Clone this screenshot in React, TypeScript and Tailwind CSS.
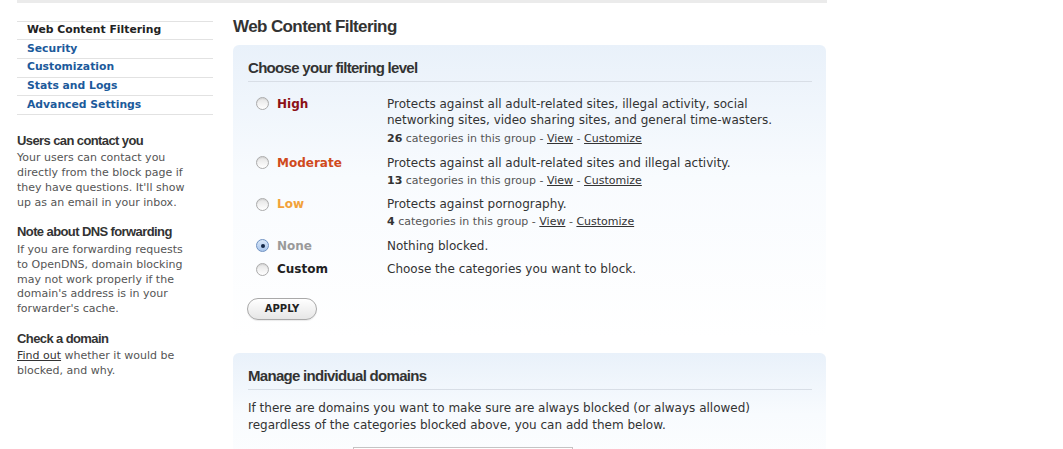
import React from "react";

const navItems = [
  { label: "Web Content Filtering", active: true },
  { label: "Security" },
  { label: "Customization" },
  { label: "Stats and Logs" },
  { label: "Advanced Settings" },
];

function Radio({ checked }: { checked?: boolean }) {
  if (checked) {
    return (
      <span className="mt-[1.5px] flex h-[13px] w-[13px] shrink-0 items-center justify-center rounded-full border border-[#6f92c2] bg-gradient-to-b from-[#d9e7f8] to-[#a9c6ec]">
        <span className="h-[4px] w-[4px] rounded-full bg-[#132847]" />
      </span>
    );
  }
  return (
    <span className="mt-[1.5px] block h-[13px] w-[13px] shrink-0 rounded-full border border-[#ababab] bg-gradient-to-b from-[#e4e4e4] to-white shadow-[inset_0_1px_1px_rgba(0,0,0,0.08)]" />
  );
}

function Cats({ n, first }: { n: number; first?: boolean }) {
  return (
    <div className={`${first ? "mt-[3.5px]" : "mt-[2px]"} text-[11px] leading-[16px] text-[#555]`}>
      <span className="font-bold text-[#333]">{n}</span> categories in this group -{" "}
      <span className="text-[#333] underline">View</span> -{" "}
      <span className="text-[#333] underline">Customize</span>
    </div>
  );
}

function Row({
  label,
  color,
  checked,
  children,
}: {
  label: string;
  color: string;
  checked?: boolean;
  children: React.ReactNode;
}) {
  return (
    <div className="flex">
      <div className="flex w-[139px] shrink-0 items-start pl-[8px]">
        <Radio checked={checked} />
        <span className={`ml-[8px] text-[12px] font-bold leading-[16px] ${color}`}>{label}</span>
      </div>
      <div className="flex-1 text-[12px] leading-[16px] text-[#333]">{children}</div>
    </div>
  );
}

function SideSection({
  title,
  first,
  children,
}: {
  title: string;
  first?: boolean;
  children: React.ReactNode;
}) {
  return (
    <div className={first ? "mt-[18px]" : "mt-[13.5px]"}>
      <h3 className="font-['Liberation_Sans',Arial,sans-serif] text-[13px] font-bold leading-[16px] tracking-[-0.6px] text-[#333]">
        {title}
      </h3>
      <p className="mt-[2.5px] whitespace-nowrap text-[11px] leading-[14.85px] text-[#555]">{children}</p>
    </div>
  );
}

export default function App() {
  return (
    <div className="min-h-[449px] w-[1063px] bg-white font-['DejaVu_Sans',Verdana,sans-serif] text-[#333]">
      <div className="ml-[17px] h-[3px] w-[810px] bg-[#ebebeb]" />
      <div className="flex">
        <aside className="ml-[17px] mt-[17.7px] w-[196px] shrink-0">
          <nav className="border-b border-[#e2e2e2]">
            {navItems.map((it) => (
              <div
                key={it.label}
                className={`flex h-[18.66px] items-center border-t border-[#e2e2e2] pl-[10px] text-[10.8px] font-bold leading-none ${
                  it.active ? "text-[#222]" : "text-[#1c5a9b]"
                }`}
              >
                {it.label}
              </div>
            ))}
          </nav>
          <SideSection title="Users can contact you" first>
            Your users can contact you
            <br />
            directly from the block page if
            <br />
            they have questions. It'll show
            <br />
            up as an email in your inbox.
          </SideSection>
          <SideSection title="Note about DNS forwarding">
            If you are forwarding requests
            <br />
            to OpenDNS, domain blocking
            <br />
            may not work properly if the
            <br />
            domain's address is in your
            <br />
            forwarder's cache.
          </SideSection>
          <SideSection title="Check a domain">
            <span className="text-[#333] underline">Find out</span> whether it would be
            <br />
            blocked, and why.
          </SideSection>
        </aside>

        <main className="ml-[20px] w-[593px] shrink-0">
          <h1 className="mt-[12.7px] font-['Liberation_Sans',Arial,sans-serif] text-[17px] font-bold leading-[22px] tracking-[-0.6px] text-[#333]">
            Web Content Filtering
          </h1>

          <section className="mt-[7.3px] rounded-[6px] bg-gradient-to-b from-[#e9f1fa] via-[#f8fbfe] via-45% to-white pb-[18px] pl-[15px] pr-[14px] pt-[14px]">
            <h2 className="border-b border-[#d8dee6] pb-[4px] font-['Liberation_Sans',Arial,sans-serif] text-[15px] font-bold leading-[18px] tracking-[-0.7px] text-[#333]">
              Choose your filtering level
            </h2>
            <div className="mt-[14px] flex flex-col gap-[7.5px]">
              <Row label="High" color="text-[#8c1016]">
                Protects against all adult-related sites, illegal activity, social
                <br />
                networking sites, video sharing sites, and general time-wasters.
                <Cats n={26} first />
              </Row>
              <Row label="Moderate" color="text-[#d04a1d]">
                Protects against all adult-related sites and illegal activity.
                <Cats n={13} />
              </Row>
              <Row label="Low" color="text-[#f2a23a]">
                Protects against pornography.
                <Cats n={4} />
              </Row>
              <Row label="None" color="text-[#9a9a9a]" checked>
                Nothing blocked.
              </Row>
              <Row label="Custom" color="text-[#222]">
                Choose the categories you want to block.
              </Row>
            </div>
            <button className="-ml-px mt-[20.5px] flex h-[22px] w-[70px] items-center justify-center rounded-full border border-[#a9a9a9] bg-gradient-to-b from-white to-[#e6e6e6] text-[10px] font-bold text-[#222] shadow-[0_1px_1px_rgba(0,0,0,0.08)]">
              APPLY
            </button>
          </section>

          <section className="mt-[15px] rounded-[6px] bg-gradient-to-b from-[#e9f1fa] via-[#f8fbfe] via-45% to-white pb-[18px] pl-[15px] pr-[14px] pt-[14px]">
            <h2 className="border-b border-[#d8dee6] pb-[4px] font-['Liberation_Sans',Arial,sans-serif] text-[15px] font-bold leading-[18px] tracking-[-0.7px] text-[#333]">
              Manage individual domains
            </h2>
            <p className="mt-[10px] text-[12px] leading-[17px] text-[#333]">
              If there are domains you want to make sure are always blocked (or always allowed)
              <br />
              regardless of the categories blocked above, you can add them below.
            </p>
            <div className="mt-[13px] flex">
              <input
                type="text"
                className="ml-[105px] h-[24px] w-[220px] border border-[#c4c4c4] bg-white px-1 text-[12px]"
              />
            </div>
          </section>
        </main>
      </div>
    </div>
  );
}
